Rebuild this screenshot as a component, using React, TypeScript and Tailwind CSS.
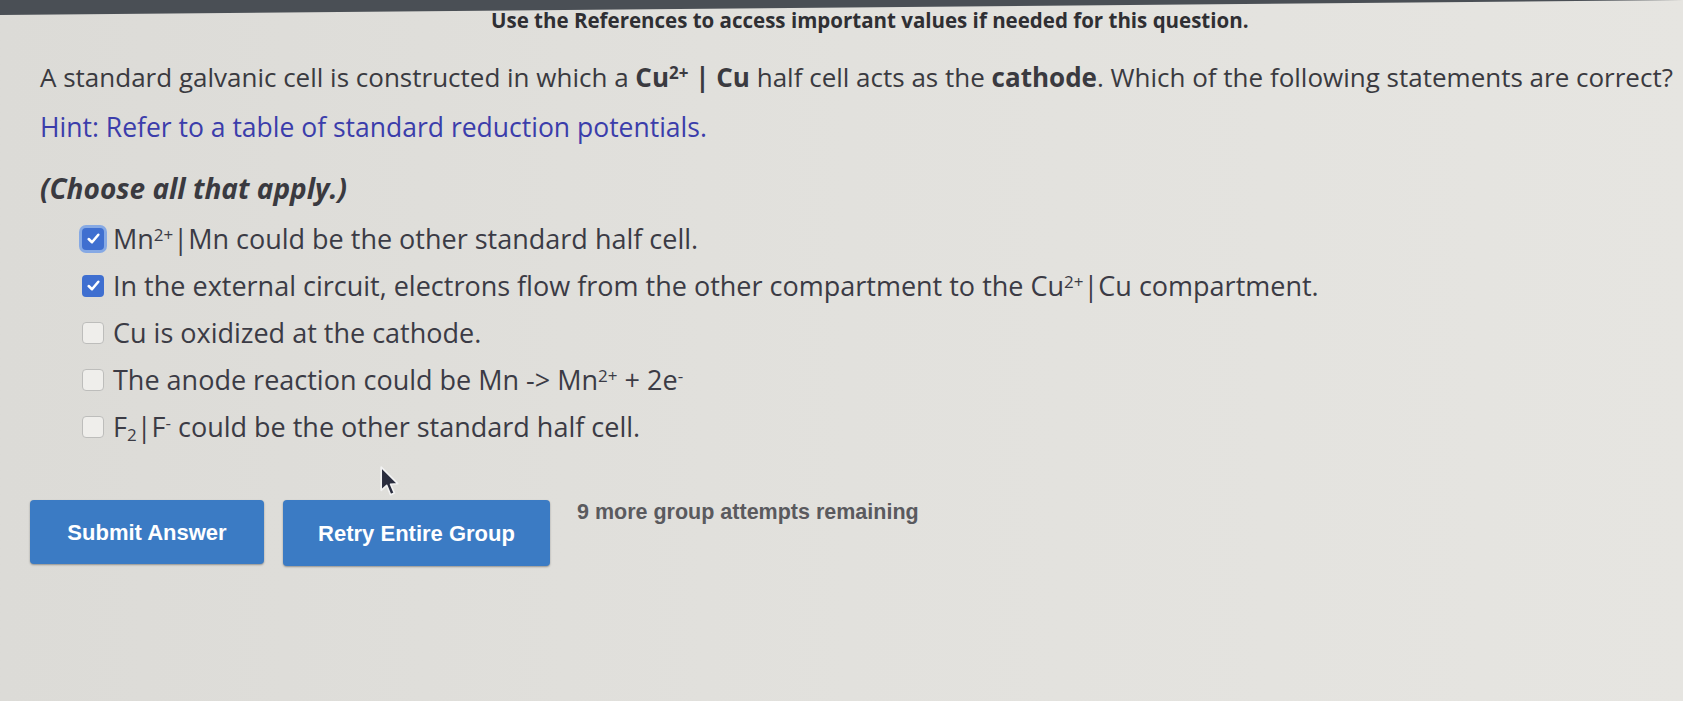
import React from "react";

const sans = { fontFamily: '"Open Sans", "Noto Sans", sans-serif' };

function Box({ checked, focus }: { checked?: boolean; focus?: boolean }) {
  if (checked) {
    return (
      <span
        className={
          "flex h-[22px] w-[22px] shrink-0 items-center justify-center rounded-[4px] bg-[#3f6fd0] " +
          (focus ? "ring-[3px] ring-[#86a9e4]" : "")
        }
      >
        <svg width="15" height="15" viewBox="0 0 14 14">
          <path d="M2.5 7.5 L5.6 10.5 L11.5 3.5" fill="none" stroke="#fff" strokeWidth="2.4" strokeLinecap="round" strokeLinejoin="round" />
        </svg>
      </span>
    );
  }
  return <span className="h-[22px] w-[22px] shrink-0 rounded-[4px] border-[1.5px] border-[#bdbdbb] bg-[#efeeeb]" />;
}

function Option({ checked, focus, children }: { checked?: boolean; focus?: boolean; children: React.ReactNode }) {
  return (
    <div className="flex h-[47px] items-center gap-[9px]">
      <Box checked={checked} focus={focus} />
      <span className="whitespace-nowrap text-[27px] leading-none text-[#3b3b45]">{children}</span>
    </div>
  );
}

export default function App() {
  return (
    <div
      className="relative h-[701px] w-[1683px] overflow-hidden bg-gradient-to-r from-[#dcdbd7] via-[#e2e1dd] to-[#e6e5e1]"
      style={sans}
    >
      <div className="absolute left-0 top-0 h-[15px] w-full bg-[#4a4f55] [clip-path:polygon(0_0,100%_0,100%_0,0_100%)]" />

      <div className="whitespace-nowrap pl-[491px] pt-[8px] text-[20.5px] font-bold leading-[24px] text-[#2f2f33]">
        Use the References to access important values if needed for this question.
      </div>

      <div className="pl-[40px]">
        <p className="mt-[28px] whitespace-nowrap text-[26px] leading-[34px] text-[#3a3a40]">
          A standard galvanic cell is constructed in which a{" "}
          <b className="font-bold">
            Cu<sup className="text-[17px]">2+</sup> | Cu
          </b>{" "}
          half cell acts as the <b className="font-bold">cathode</b>. Which of the following statements are correct?
        </p>
        <p className="mt-[16px] whitespace-nowrap text-[26.5px] leading-[34px] text-[#3b3dab]">
          Hint: Refer to a table of standard reduction potentials.
        </p>
        <p className="mt-[27px] text-[28px] font-bold italic leading-[34px] text-[#3a3a40]">(Choose all that apply.)</p>

        <div className="ml-[42px] mt-[10px] flex flex-col">
          <Option checked focus>
            Mn<sup className="text-[17px]">2+</sup>|Mn could be the other standard half cell.
          </Option>
          <Option checked>
            In the external circuit, electrons flow from the other compartment to the Cu
            <sup className="text-[17px]">2+</sup>|Cu compartment.
          </Option>
          <Option>Cu is oxidized at the cathode.</Option>
          <Option>
            The anode reaction could be Mn -&gt; Mn<sup className="text-[17px]">2+</sup> + 2e
            <sup className="text-[17px]">-</sup>
          </Option>
          <Option>
            F<sub className="text-[17px]">2</sub>|F<sup className="text-[17px]">-</sup> could be the other standard half cell.
          </Option>
        </div>
      </div>

      <div
        className="ml-[30px] mt-[50px] flex items-start gap-[19px]"
        style={{ fontFamily: '"Liberation Sans", Arial, sans-serif' }}
      >
        <button className="h-[64px] w-[234px] rounded-[4px] bg-[#3b7bc4] text-[22px] font-bold text-white shadow-[0_1px_2px_rgba(0,0,0,0.35)]">
          Submit Answer
        </button>
        <button className="relative h-[66px] w-[267px] rounded-[4px] bg-[#3b7bc4] text-[22px] font-bold text-white shadow-[0_1px_2px_rgba(0,0,0,0.35)]">
          Retry Entire Group
          <svg className="absolute left-[96px] top-[-34px]" width="22" height="31" viewBox="0 0 20 28">
            <path d="M2 1 L2 22 L7 17.5 L10.5 26 L14 24.5 L10.5 16.5 L17 16 Z" fill="#2a2d3e" stroke="#f2f2f2" strokeWidth="1.5" strokeLinejoin="round" />
          </svg>
        </button>
        <span className="ml-[8px] mt-[-4px] whitespace-nowrap text-[21.5px] font-bold text-[#5a5a5e]">9 more group attempts remaining</span>
      </div>
    </div>
  );
}
